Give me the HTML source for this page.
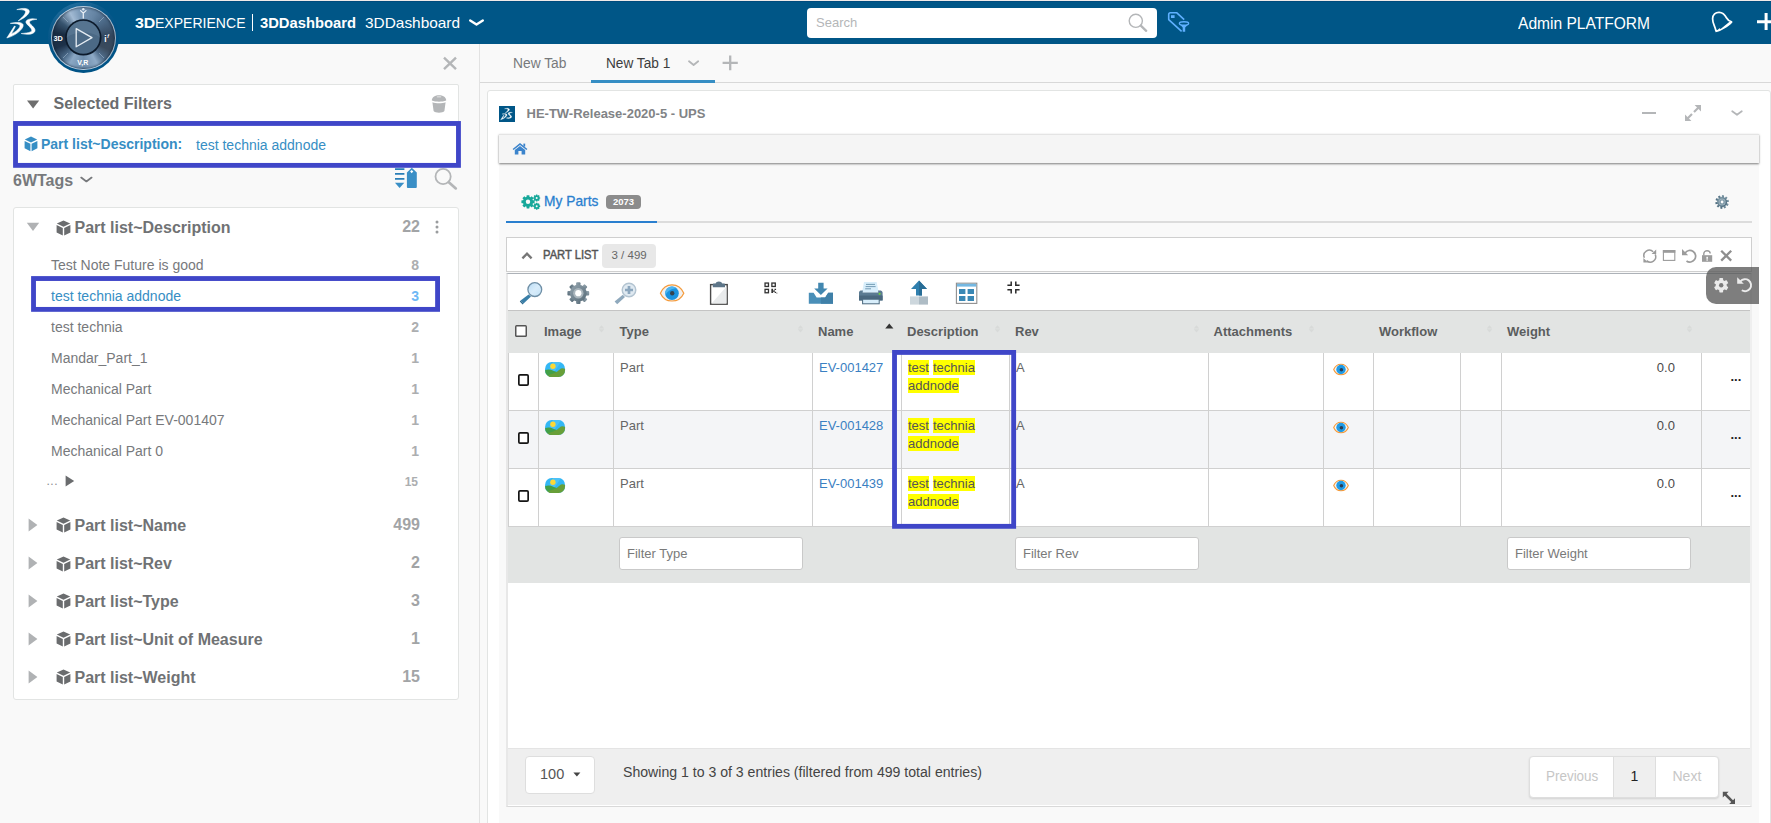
<!DOCTYPE html>
<html>
<head>
<meta charset="utf-8">
<title>3DDashboard</title>
<style>
*{box-sizing:border-box;margin:0;padding:0}
html,body{width:1771px;height:823px;overflow:hidden}
body{font-family:"Liberation Sans",sans-serif;background:#f9f9f9;color:#77797c;position:relative;font-size:13px}
.abs{position:absolute}
.t{position:absolute;white-space:nowrap;line-height:1}
svg{position:absolute;overflow:visible}
/* ---------- header ---------- */
#topstrip{left:0;top:0;width:1771px;height:1px;background:#f0eae9}
#hdr{left:0;top:1px;width:1771px;height:43px;background:#005687;border-top:1px solid #004b7d}
#search{left:807px;top:8px;width:350px;height:30px;background:#fff;border-radius:4px}
/* ---------- left panel ---------- */
#divider{left:479px;top:44px;width:1px;height:779px;background:#e2e2e2}
#selbox{left:13px;top:84px;width:446px;height:82px;background:#fff;border:1px solid #e2e4e3;border-radius:2px}
#tagbox{left:13px;top:207px;width:446px;height:493px;background:#fff;border:1px solid #e2e4e3;border-radius:3px}
.hl{border:4.8px solid #3f46c8;background:transparent}
.it{font-size:14px;color:#77797c}
.cnt{font-size:14px;color:#acaeb0;font-weight:bold;text-align:right;width:40px}
.grp{font-size:16px;font-weight:bold;color:#707274}
.gcnt{font-size:16px;color:#a2a4a6;font-weight:bold;text-align:right;width:60px}
/* ---------- tab bar ---------- */
#tabline{left:480px;top:82px;width:1291px;height:1px;background:#d8d8d8}
#tabactive{left:591px;top:80px;width:124px;height:3px;background:#368ec4}
/* ---------- widget ---------- */
#widget{left:487px;top:90px;width:1284px;height:740px;background:#fff;border:1px solid #e2e4e3;border-radius:3px}
#wbody{left:499px;top:134px;width:1260px;height:689px;background:#f9f9f9}
#crumb{left:499px;top:134px;width:1260px;height:29px;background:#f5f5f5;border-top:1px solid #e4e4e4;box-shadow:0 1px 2px rgba(0,0,0,.5)}
#mptabline{left:506px;top:221px;width:1246px;height:2px;background:#dcdcdc}
#mptabact{left:506px;top:221px;width:151px;height:2px;background:#2a7fcf}
#plhead{left:506px;top:237px;width:1246px;height:35px;background:#fff;border:1px solid #cfcfcf}
#plbody{left:506px;top:273px;width:1246px;height:534px;background:#fff;border-left:2px solid #e8e8e8;border-right:2px solid #efefef;border-bottom:1px solid #d9d9d9;border-top:1px solid #adb2b8}
#toolbar{left:508px;top:274px;width:1242px;height:37px;background:#fff;border-bottom:1px solid #c4c4c4}
#thead{left:508px;top:311px;width:1242px;height:42px;background:#e2e4e3}
#tfoot{left:508px;top:527px;width:1242px;height:56px;background:#e2e4e3}
#pfoot{left:508px;top:748px;width:1242px;height:57px;background:#efefef;border-top:1px solid #e4e4e4}
.row{left:508px;width:1242px;height:58px;border-bottom:1px solid #d0d0d0}
.vl{width:1px;background:#d0d0d0;top:353px;height:174px}
.th{font-size:13px;font-weight:bold;color:#5b5d5e}
.td{font-size:13px;color:#666}
.lnk{font-size:13px;color:#3a80c2}
.mark{background:#ffff00;color:#555;font-size:13px;line-height:15px;height:15px}
.finp{height:33px;width:184px;background:#fff;border:1px solid #c9c9c9;border-radius:3px;top:537px}
.finp span{position:absolute;left:7px;top:9.2px;font-size:13px;color:#7a7a7a;line-height:1;white-space:nowrap}
.cb{width:11.4px;height:11.6px;box-shadow:inset 0 0 0 1.7px #151515;border-radius:2px;background:#fff}
</style>
</head>
<body>
<!-- HEADER -->
<div id="topstrip" class="abs"></div>
<div id="hdr" class="abs"></div>
<div id="search" class="abs"></div>

<!-- LEFT PANEL -->
<div id="divider" class="abs"></div>
<div id="selbox" class="abs"></div>
<div id="tagbox" class="abs"></div>

<!-- TAB BAR -->
<div id="tabline" class="abs"></div>
<div id="tabactive" class="abs"></div>

<!-- WIDGET -->
<div id="widget" class="abs"></div>
<div id="wbody" class="abs"></div>
<div id="crumb" class="abs"></div>
<div id="mptabline" class="abs"></div>
<div id="mptabact" class="abs"></div>
<div id="plhead" class="abs"></div>
<div id="plbody" class="abs"></div>
<div id="toolbar" class="abs"></div>
<div id="thead" class="abs"></div>
<div class="row abs" style="top:353px;background:#fff"></div>
<div class="row abs" style="top:411px;background:#f4f5f7"></div>
<div class="row abs" style="top:469px;background:#fff"></div>
<div id="tfoot" class="abs"></div>
<div id="pfoot" class="abs"></div>
<!--VLINES-->
<div class="abs vl" style="left:538px"></div>
<div class="abs vl" style="left:613px"></div>
<div class="abs vl" style="left:812px"></div>
<div class="abs vl" style="left:901px"></div>
<div class="abs vl" style="left:1009px"></div>
<div class="abs vl" style="left:1208px"></div>
<div class="abs vl" style="left:1323px"></div>
<div class="abs vl" style="left:1373px"></div>
<div class="abs vl" style="left:1460px"></div>
<div class="abs vl" style="left:1501px"></div>
<div class="abs vl" style="left:1701px"></div>
<!--/VLINES-->
<!--TABLECONTENT-->
<div class="abs cb" style="left:515.2px;top:325.2px;width:11.4px;height:11.4px;box-shadow:inset 0 0 0 1.5px #555;border-radius:1.5px"></div>
<span class="t th" id="th0" style="left:544px;top:324.9px">Image</span>
<span class="t th" id="th1" style="left:619.5px;top:324.9px">Type</span>
<span class="t th" id="th2" style="left:818px;top:324.9px">Name</span>
<span class="t th" id="th3" style="left:907px;top:324.9px">Description</span>
<span class="t th" id="th4" style="left:1015px;top:324.9px">Rev</span>
<span class="t th" id="th5" style="left:1213.5px;top:324.9px">Attachments</span>
<span class="t th" id="th6" style="left:1379px;top:324.9px">Workflow</span>
<span class="t th" id="th7" style="left:1507px;top:324.9px">Weight</span>
<svg style="left:598.0px;top:325.2px" width="7" height="8" viewBox="0 0 7 8"><path d="M3.5,0.2 L6.3,3.5 H0.7 Z M3.5,7.6 L6.3,4.2 H0.7 Z" fill="#d8dad9"/></svg>
<svg style="left:796.5px;top:325.2px" width="7" height="8" viewBox="0 0 7 8"><path d="M3.5,0.2 L6.3,3.5 H0.7 Z M3.5,7.6 L6.3,4.2 H0.7 Z" fill="#d8dad9"/></svg>
<svg style="left:993.5px;top:325.2px" width="7" height="8" viewBox="0 0 7 8"><path d="M3.5,0.2 L6.3,3.5 H0.7 Z M3.5,7.6 L6.3,4.2 H0.7 Z" fill="#d8dad9"/></svg>
<svg style="left:1193.0px;top:325.2px" width="7" height="8" viewBox="0 0 7 8"><path d="M3.5,0.2 L6.3,3.5 H0.7 Z M3.5,7.6 L6.3,4.2 H0.7 Z" fill="#d8dad9"/></svg>
<svg style="left:1307.5px;top:325.2px" width="7" height="8" viewBox="0 0 7 8"><path d="M3.5,0.2 L6.3,3.5 H0.7 Z M3.5,7.6 L6.3,4.2 H0.7 Z" fill="#d8dad9"/></svg>
<svg style="left:1485.5px;top:325.2px" width="7" height="8" viewBox="0 0 7 8"><path d="M3.5,0.2 L6.3,3.5 H0.7 Z M3.5,7.6 L6.3,4.2 H0.7 Z" fill="#d8dad9"/></svg>
<svg style="left:1686.0px;top:325.2px" width="7" height="8" viewBox="0 0 7 8"><path d="M3.5,0.2 L6.3,3.5 H0.7 Z M3.5,7.6 L6.3,4.2 H0.7 Z" fill="#d8dad9"/></svg>
<svg style="left:885px;top:323px" width="9" height="6" viewBox="0 0 9 6"><path d="M4.3,0.4 L8.4,5.4 H0.2 Z" fill="#333"/></svg>
<div class="abs cb" style="left:518px;top:374px"></div>
<svg style="left:545px;top:361.8px" width="20" height="15" viewBox="0 0 20 15"><defs><clipPath id="ic0"><rect x="0" y="0" width="20.1" height="15.1" rx="6.6" ry="7.2"/></clipPath></defs><g clip-path="url(#ic0)"><rect width="21" height="16" fill="#33b7f5"/><path d="M8,0 L16,0 L8,12 L2,12 Z" fill="#55c5f8" opacity=".7"/><circle cx="7.9" cy="4.2" r="2.7" fill="#fdd835"/><path d="M0,8.2 C2,7.4 4.5,7.2 6.5,8 C9,9 10.5,9.8 12.4,10.3 L6,15.2 H0 Z" fill="#43a047"/><path d="M0,15.2 L3,13.2 C7,12 10,10.9 12,9.8 C14,8.2 15.4,6.2 17.2,6.2 C18.5,6.2 19.4,6.6 20.2,7 V15.2 Z" fill="#689f38"/></g></svg>
<span class="t td" style="left:620px;top:361px">Part</span>
<span class="t lnk" id="n0" style="left:819px;top:361px">EV-001427</span>
<span class="t mark" id="m0a" style="left:908px;top:360px">test</span>
<span class="t mark" id="m0b" style="left:933px;top:360px">technia</span>
<span class="t mark" id="m0c" style="left:908px;top:378px">addnode</span>
<span class="t td" style="left:1016px;top:361px">A</span>
<svg style="left:1333px;top:362.7px" width="16" height="13" viewBox="0 0 16 13"><path d="M0.7,6.5 C3.6,-0.5 12.4,-0.5 15.3,6.5 C12.4,13.5 3.6,13.5 0.7,6.5 Z" fill="#f4f4f4" stroke="#f59a3a" stroke-width="1.1"/><circle cx="8" cy="6.5" r="4.7" fill="#1f9be6"/><circle cx="8.4" cy="6.7" r="1.8" fill="#2b3d52"/></svg>
<span class="t td" style="left:1635px;top:361px;width:40px;text-align:right;letter-spacing:.1px;color:#4a4a4a">0.0</span>
<span class="t" style="left:1730.5px;top:369.7px;font-size:13px;font-weight:bold;color:#222;letter-spacing:0px">...</span>
<div class="abs cb" style="left:518px;top:432px"></div>
<svg style="left:545px;top:419.8px" width="20" height="15" viewBox="0 0 20 15"><defs><clipPath id="ic1"><rect x="0" y="0" width="20.1" height="15.1" rx="6.6" ry="7.2"/></clipPath></defs><g clip-path="url(#ic1)"><rect width="21" height="16" fill="#33b7f5"/><path d="M8,0 L16,0 L8,12 L2,12 Z" fill="#55c5f8" opacity=".7"/><circle cx="7.9" cy="4.2" r="2.7" fill="#fdd835"/><path d="M0,8.2 C2,7.4 4.5,7.2 6.5,8 C9,9 10.5,9.8 12.4,10.3 L6,15.2 H0 Z" fill="#43a047"/><path d="M0,15.2 L3,13.2 C7,12 10,10.9 12,9.8 C14,8.2 15.4,6.2 17.2,6.2 C18.5,6.2 19.4,6.6 20.2,7 V15.2 Z" fill="#689f38"/></g></svg>
<span class="t td" style="left:620px;top:419px">Part</span>
<span class="t lnk" id="n1" style="left:819px;top:419px">EV-001428</span>
<span class="t mark" id="m1a" style="left:908px;top:418px">test</span>
<span class="t mark" id="m1b" style="left:933px;top:418px">technia</span>
<span class="t mark" id="m1c" style="left:908px;top:436px">addnode</span>
<span class="t td" style="left:1016px;top:419px">A</span>
<svg style="left:1333px;top:420.7px" width="16" height="13" viewBox="0 0 16 13"><path d="M0.7,6.5 C3.6,-0.5 12.4,-0.5 15.3,6.5 C12.4,13.5 3.6,13.5 0.7,6.5 Z" fill="#f4f4f4" stroke="#f59a3a" stroke-width="1.1"/><circle cx="8" cy="6.5" r="4.7" fill="#1f9be6"/><circle cx="8.4" cy="6.7" r="1.8" fill="#2b3d52"/></svg>
<span class="t td" style="left:1635px;top:419px;width:40px;text-align:right;letter-spacing:.1px;color:#4a4a4a">0.0</span>
<span class="t" style="left:1730.5px;top:427.7px;font-size:13px;font-weight:bold;color:#222;letter-spacing:0px">...</span>
<div class="abs cb" style="left:518px;top:490px"></div>
<svg style="left:545px;top:477.8px" width="20" height="15" viewBox="0 0 20 15"><defs><clipPath id="ic2"><rect x="0" y="0" width="20.1" height="15.1" rx="6.6" ry="7.2"/></clipPath></defs><g clip-path="url(#ic2)"><rect width="21" height="16" fill="#33b7f5"/><path d="M8,0 L16,0 L8,12 L2,12 Z" fill="#55c5f8" opacity=".7"/><circle cx="7.9" cy="4.2" r="2.7" fill="#fdd835"/><path d="M0,8.2 C2,7.4 4.5,7.2 6.5,8 C9,9 10.5,9.8 12.4,10.3 L6,15.2 H0 Z" fill="#43a047"/><path d="M0,15.2 L3,13.2 C7,12 10,10.9 12,9.8 C14,8.2 15.4,6.2 17.2,6.2 C18.5,6.2 19.4,6.6 20.2,7 V15.2 Z" fill="#689f38"/></g></svg>
<span class="t td" style="left:620px;top:477px">Part</span>
<span class="t lnk" id="n2" style="left:819px;top:477px">EV-001439</span>
<span class="t mark" id="m2a" style="left:908px;top:476px">test</span>
<span class="t mark" id="m2b" style="left:933px;top:476px">technia</span>
<span class="t mark" id="m2c" style="left:908px;top:494px">addnode</span>
<span class="t td" style="left:1016px;top:477px">A</span>
<svg style="left:1333px;top:478.7px" width="16" height="13" viewBox="0 0 16 13"><path d="M0.7,6.5 C3.6,-0.5 12.4,-0.5 15.3,6.5 C12.4,13.5 3.6,13.5 0.7,6.5 Z" fill="#f4f4f4" stroke="#f59a3a" stroke-width="1.1"/><circle cx="8" cy="6.5" r="4.7" fill="#1f9be6"/><circle cx="8.4" cy="6.7" r="1.8" fill="#2b3d52"/></svg>
<span class="t td" style="left:1635px;top:477px;width:40px;text-align:right;letter-spacing:.1px;color:#4a4a4a">0.0</span>
<span class="t" style="left:1730.5px;top:485.7px;font-size:13px;font-weight:bold;color:#222;letter-spacing:0px">...</span>
<div class="abs finp" style="left:619px"><span>Filter Type</span></div>
<div class="abs finp" style="left:1015px"><span>Filter Rev</span></div>
<div class="abs finp" style="left:1507px"><span>Filter Weight</span></div>
<!--/TABLECONTENT-->
<!--HEADERCONTENT-->
<!-- DS logo -->
<svg style="left:0;top:0" width="50" height="46" viewBox="0 0 50 46">
 <g fill="#fff" stroke="#fff" stroke-width=".55" stroke-linejoin="round">
  <path d="M16.8,9.6 C21,8.2 27.2,7.6 29,10.2 C30.6,12.8 26,17.4 18.2,20.9 C22.6,17.2 26.3,13.2 25.4,11.3 C24.6,9.7 20,9.5 16.8,9.6 Z"/>
  <path d="M10.3,23.4 C15,22.2 22,21.7 23.1,24.6 C24.2,28.6 16,35.6 6.8,38 L14.4,26.1 L15.4,26.5 L11.5,33.8 C15.5,32.1 20.4,28 19.9,25.4 C19.4,23.5 14,23.4 10.3,23.4 Z"/>
  <path d="M36.9,19.3 C33,18.1 27,18.8 26,21.4 C25,24.1 31.8,27.2 31.8,30.4 C31.8,32.4 26,33.2 21.2,33.5 C27,35 34,34.6 35,31 C36,27.5 28.6,24 29.6,21.8 C30.3,20.1 34,19.6 36.9,19.3 Z"/>
 </g>
</svg>
<!-- compass -->
<div class="abs" style="left:47.5px;top:1.5px;width:71.5px;height:71.5px;border-radius:50%;background:linear-gradient(160deg,#2f78a6 0%,#0d5c8d 25%,#005386 50%,#005386 100%)"></div>
<div class="abs" style="left:51px;top:5.5px;width:64.5px;height:64.5px;border-radius:50%;border:1px solid rgba(205,220,235,.75);background:conic-gradient(from 0deg,#7594b3 0deg,#6685a4 25deg,#4c6a88 50deg,#33475e 85deg,#3a4a5c 115deg,#4f6c8a 135deg,#8eaac6 152deg,#6f8fae 180deg,#8aa7c4 208deg,#4a6988 225deg,#1d3149 250deg,#182b41 280deg,#37546f 305deg,#a2bad3 332deg,#7e9cba 350deg,#7594b3 360deg);box-shadow:inset 0 0 3px #0a1d30"></div>
<svg style="left:47px;top:1px" width="73" height="73" viewBox="0 0 73 73">
 <g stroke="#9db4ca" stroke-width="0.8" opacity=".8">
  <line x1="52" y1="21" x2="57" y2="16"/><line x1="21" y1="21" x2="16" y2="16"/>
  <line x1="52" y1="52" x2="57" y2="57"/><line x1="21" y1="52" x2="16" y2="57"/>
 </g>
 <circle cx="36.3" cy="36.4" r="18.2" fill="#0c1a2b"/>
 <circle cx="36.3" cy="36.4" r="16.4" fill="#4b6985"/>
 <path d="M36.3,19.8 A16.6,16.6 0 0 1 52.9,36.4 C45,30 28,30 19.7,36.4 A16.6,16.6 0 0 1 36.3,19.8Z" fill="#5d7b97" opacity=".6"/>
 <path d="M29.2,27.6 L45,36.6 L29.2,45.8 Z" fill="none" stroke="#e6edf3" stroke-width="1.3" stroke-linejoin="round"/>
 <g fill="#fff" font-family="Liberation Sans, sans-serif" font-weight="bold">
  <text x="6.4" y="39.8" font-size="7.3">3D</text>
  <text x="30.2" y="64" font-size="7">V,R</text>
  <text x="57.2" y="40.5" font-size="8.5">i</text>
  <text x="60.2" y="36.5" font-size="5" font-style="italic">f</text>
 </g>
 <g stroke="#e8eef4" stroke-width="1.3" fill="none" stroke-linecap="round">
  <path d="M36.3,17 V11.8 M33.6,9.6 L36.3,12.2 L39,9.6"/>
 </g>
 <circle cx="36.3" cy="8.3" r="1.2" fill="#dfe8f0"/>
</svg>
<!-- brand text -->
<span class="t" id="h1" style="left:134.5px;top:15px;font-size:15px;color:#fff;font-weight:bold;transform-origin:0 0;transform:scaleX(1.06)">3D</span>
<span class="t" id="h2" style="left:155px;top:15px;font-size:15px;color:#fff;transform-origin:0 0;transform:scaleX(0.936)">EXPERIENCE</span>
<div class="abs" style="left:251.5px;top:14px;width:1px;height:17px;background:#fff"></div>
<span class="t" id="h3" style="left:259.5px;top:15px;font-size:15px;color:#fff;font-weight:bold;transform-origin:0 0;transform:scaleX(0.984)">3DDashboard</span>
<span class="t" id="h4" style="left:364.5px;top:15px;font-size:15px;color:#fff;transform-origin:0 0;transform:scaleX(1.027)">3DDashboard</span>
<svg style="left:469px;top:19px" width="15" height="8" viewBox="0 0 15 8"><path d="M1.2,1.5 L7.5,5.5 L13.8,1.5" fill="none" stroke="#fff" stroke-width="2.4" stroke-linecap="round" stroke-linejoin="round"/></svg>
<!-- search -->
<span class="t" id="h5" style="left:816px;top:16px;font-size:13px;color:#b4b6b8;transform-origin:0 0">Search</span>
<svg style="left:1126px;top:11px" width="24" height="24" viewBox="0 0 24 24"><circle cx="9.8" cy="9.8" r="6.6" fill="none" stroke="#b4b6b8" stroke-width="1.4"/><path d="M14.8,14.6 L20.2,19.8" stroke="#b4b6b8" stroke-width="2.3" stroke-linecap="round"/></svg>
<!-- tag filter icon -->
<svg style="left:1166px;top:10px" width="26" height="24" viewBox="0 0 26 24">
 <path d="M18.2,9.7 L10.6,2.7 H4.4 Q2.7,2.7 2.7,4.4 V9.6 L15.6,21.4" fill="none" stroke="#5fb0ff" stroke-width="1.6" stroke-linejoin="round"/>
 <rect x="5" y="5.2" width="3.6" height="2.8" fill="#5fb0ff"/>
 <path d="M13.4,14 L16.7,17.6 V21.8 H19.2 V17.6 L22.6,14 Z" fill="#5fb0ff"/>
 <ellipse cx="18" cy="13.4" rx="4.6" ry="1.7" fill="#005687" stroke="#5fb0ff" stroke-width="1.4"/>
</svg>
<!-- user -->
<span class="t" id="h6" style="left:1518px;top:15.5px;font-size:16px;color:#fff;transform-origin:0 0;transform:scaleX(0.973)">Admin PLATFORM</span>
<!-- bell -->
<svg style="left:1710px;top:10px" width="26" height="24" viewBox="0 0 26 24">
 <path d="M5.8,20.4 C5,16.2 2.5,13.2 2.6,8.8 C2.7,4.6 5.6,2.2 9.2,2.3 C13,2.4 15,5 16.6,8 C17.8,10.2 19.4,11.2 21.6,11.8" fill="none" stroke="#fff" stroke-width="1.7" stroke-linecap="round"/>
 <path d="M5,19.6 L7.6,20 L9.4,18.2 L10.6,19 L20.8,10.8 L22.4,12.4 C18.2,16.8 11.2,21 5.6,22.2 Z" fill="#fff"/>
</svg>
<!-- plus -->
<svg style="left:1756px;top:12px" width="16" height="20" viewBox="0 0 16 20"><path d="M1,9.7 H16 M10.1,1.1 V18.1" stroke="#fff" stroke-width="3"/></svg>
<!--/HEADERCONTENT-->
<!--LEFTCONTENT-->
<!-- close x -->
<svg style="left:442px;top:56px" width="16" height="15" viewBox="0 0 16 15"><path d="M2,1.6 L14,13.2 M14,1.6 L2,13.2" stroke="#b4b6b8" stroke-width="2.4"/></svg>
<!-- selected filters -->
<svg style="left:26px;top:99px" width="14" height="10" viewBox="0 0 14 10"><path d="M1,1.6 H13.2 L7.1,9.4 Z" fill="#6e6e6e"/></svg>
<span class="t" id="l1" style="left:53.5px;top:96px;font-size:16px;font-weight:bold;color:#6a6c6e">Selected Filters</span>
<svg style="left:430px;top:94px" width="18" height="20" viewBox="0 0 18 20">
 <path d="M1.8,6.6 C1.8,-0.4 16.2,-0.4 16.2,6.6 C12,8.2 6,8.2 1.8,6.6 Z" fill="#b4b6b8"/>
 <rect x="6.8" y="2" width="4.4" height="1.6" rx=".6" fill="#d4d5d6"/>
 <path d="M2.4,8.2 C6,9.6 12,9.6 15.6,8.2 L14.4,17 C13,19.2 5,19.2 3.6,17 Z" fill="#b4b6b8"/>
</svg>
<!-- selected row -->
<svg style="left:24px;top:136px" width="14" height="16" viewBox="0 0 14 16" id="cube0">
 <path d="M7,0.6 L13.2,3.6 L7,6.6 L0.8,3.6 Z" fill="#368ec4"/>
 <path d="M0.6,5 L6.4,7.8 V15.2 L0.6,12.2 Z" fill="#368ec4"/>
 <path d="M13.4,5 L7.6,7.8 V15.2 L13.4,12.2 Z" fill="#368ec4"/>
</svg>
<span class="t" id="l2" style="left:41px;top:136.5px;font-size:14px;font-weight:bold;color:#368ec4">Part list~Description:</span>
<span class="t" id="l3" style="left:196px;top:137.5px;font-size:14px;color:#368ec4">test technia addnode</span>
<!-- 6WTags -->
<span class="t" id="l4" style="left:13px;top:173px;font-size:16px;font-weight:bold;color:#77797c">6WTags</span>
<svg style="left:80px;top:176px" width="13" height="8" viewBox="0 0 13 8"><path d="M1.2,1.6 L6.4,5.4 L11.6,1.6" fill="none" stroke="#77797c" stroke-width="1.8" stroke-linecap="round" stroke-linejoin="round"/></svg>
<svg style="left:393px;top:167px" width="26" height="22" viewBox="0 0 26 22">
 <g stroke="#2a7fb8" stroke-width="1.8"><path d="M2,2.1 H11.4 M2,6.9 H11.4 M2,11.8 H11.4"/></g>
 <path d="M2,15.8 H11.3 L6.6,21 Z" fill="#3a8fc6"/>
 <path d="M13.9,5.4 L18.8,0.8 L23.8,5.4 V20 Q23.8,21 22.8,21 H14.9 Q13.9,21 13.9,20 Z" fill="#3a8fc6"/>
 <path d="M18.7,3 L20.3,4.6 L18.7,6.2 L17.1,4.6 Z" fill="#fff"/>
</svg>
<svg style="left:433px;top:168px" width="26" height="24" viewBox="0 0 26 24"><circle cx="10.1" cy="8.5" r="7.6" fill="none" stroke="#b4b6b8" stroke-width="1.8"/><path d="M15.8,14.2 L22.8,20.4" stroke="#b4b6b8" stroke-width="2.7" stroke-linecap="round"/></svg>
<!-- tag groups -->
<svg style="left:26px;top:222px" width="14" height="10" viewBox="0 0 14 10"><path d="M0.8,0.8 H13.2 L7,9 Z" fill="#b0b2b4"/></svg>
<svg class="cube" style="left:56px;top:220px" width="15" height="16" viewBox="0 0 15 16"><path d="M7.5,0.4 L14.2,3.6 L7.5,6.8 L0.8,3.6 Z M0.6,5.1 L6.8,8 V15.6 L0.6,12.4 Z M14.4,5.1 L8.2,8 V15.6 L14.4,12.4 Z" fill="#6a6c6e"/></svg>
<span class="t grp" id="g0" style="left:74.5px;top:219.8px">Part list~Description</span>
<span class="t gcnt" style="left:360px;top:218.8px">22</span>
<svg style="left:435px;top:219px" width="4" height="16" viewBox="0 0 4 16"><circle cx="2" cy="3" r="1.5" fill="#9a9c9e"/><circle cx="2" cy="8" r="1.5" fill="#9a9c9e"/><circle cx="2" cy="13" r="1.5" fill="#9a9c9e"/></svg>

<span class="t it" id="i0" style="left:51px;top:257.5px">Test Note Future is good</span><span class="t cnt" style="left:379px;top:258.0px">8</span>
<span class="t it" id="i1" style="left:51px;top:288.5px;color:#368ec4">test technia addnode</span><span class="t cnt" style="left:379px;top:289.0px;color:#6fb8f5">3</span>
<span class="t it" id="i2" style="left:51px;top:319.5px">test technia</span><span class="t cnt" style="left:379px;top:320.0px">2</span>
<span class="t it" id="i3" style="left:51px;top:350.5px">Mandar_Part_1</span><span class="t cnt" style="left:379px;top:351.0px">1</span>
<span class="t it" id="i4" style="left:51px;top:381.5px">Mechanical Part</span><span class="t cnt" style="left:379px;top:382.0px">1</span>
<span class="t it" id="i5" style="left:51px;top:412.5px">Mechanical Part EV-001407</span><span class="t cnt" style="left:379px;top:413.0px">1</span>
<span class="t it" id="i6" style="left:51px;top:443.5px">Mechanical Part 0</span><span class="t cnt" style="left:379px;top:444.0px">1</span>
<span class="t" style="left:46.5px;top:475.2px;font-size:12px;color:#8a8c8e;letter-spacing:.5px">...</span>
<svg style="left:65px;top:475px" width="10" height="12" viewBox="0 0 10 12"><path d="M0.6,0.4 L9.2,6 L0.6,11.6 Z" fill="#6a6c6e"/></svg>
<span class="t cnt" style="left:378px;top:476px;font-size:12px;font-weight:bold">15</span>
<svg style="left:28px;top:517.9px" width="10" height="14" viewBox="0 0 10 14"><path d="M0.6,0.6 L9.4,7 L0.6,13.4 Z" fill="#b0b2b4"/></svg>
<svg class="cube" style="left:56px;top:517.1px" width="15" height="16" viewBox="0 0 15 16"><path d="M7.5,0.4 L14.2,3.6 L7.5,6.8 L0.8,3.6 Z M0.6,5.1 L6.8,8 V15.6 L0.6,12.4 Z M14.4,5.1 L8.2,8 V15.6 L14.4,12.4 Z" fill="#6a6c6e"/></svg>
<span class="t grp" id="g1" style="left:74.5px;top:517.8px">Part list~Name</span>
<span class="t gcnt" style="left:360px;top:516.8px">499</span>
<svg style="left:28px;top:556.3px" width="10" height="14" viewBox="0 0 10 14"><path d="M0.6,0.6 L9.4,7 L0.6,13.4 Z" fill="#b0b2b4"/></svg>
<svg class="cube" style="left:56px;top:555.5px" width="15" height="16" viewBox="0 0 15 16"><path d="M7.5,0.4 L14.2,3.6 L7.5,6.8 L0.8,3.6 Z M0.6,5.1 L6.8,8 V15.6 L0.6,12.4 Z M14.4,5.1 L8.2,8 V15.6 L14.4,12.4 Z" fill="#6a6c6e"/></svg>
<span class="t grp" id="g2" style="left:74.5px;top:556.2px">Part list~Rev</span>
<span class="t gcnt" style="left:360px;top:555.2px">2</span>
<svg style="left:28px;top:594.1px" width="10" height="14" viewBox="0 0 10 14"><path d="M0.6,0.6 L9.4,7 L0.6,13.4 Z" fill="#b0b2b4"/></svg>
<svg class="cube" style="left:56px;top:593.3px" width="15" height="16" viewBox="0 0 15 16"><path d="M7.5,0.4 L14.2,3.6 L7.5,6.8 L0.8,3.6 Z M0.6,5.1 L6.8,8 V15.6 L0.6,12.4 Z M14.4,5.1 L8.2,8 V15.6 L14.4,12.4 Z" fill="#6a6c6e"/></svg>
<span class="t grp" id="g3" style="left:74.5px;top:594.0px">Part list~Type</span>
<span class="t gcnt" style="left:360px;top:593.0px">3</span>
<svg style="left:28px;top:632.1px" width="10" height="14" viewBox="0 0 10 14"><path d="M0.6,0.6 L9.4,7 L0.6,13.4 Z" fill="#b0b2b4"/></svg>
<svg class="cube" style="left:56px;top:631.3px" width="15" height="16" viewBox="0 0 15 16"><path d="M7.5,0.4 L14.2,3.6 L7.5,6.8 L0.8,3.6 Z M0.6,5.1 L6.8,8 V15.6 L0.6,12.4 Z M14.4,5.1 L8.2,8 V15.6 L14.4,12.4 Z" fill="#6a6c6e"/></svg>
<span class="t grp" id="g4" style="left:74.5px;top:632.0px">Part list~Unit of Measure</span>
<span class="t gcnt" style="left:360px;top:631.0px">1</span>
<svg style="left:28px;top:670.0px" width="10" height="14" viewBox="0 0 10 14"><path d="M0.6,0.6 L9.4,7 L0.6,13.4 Z" fill="#b0b2b4"/></svg>
<svg class="cube" style="left:56px;top:669.2px" width="15" height="16" viewBox="0 0 15 16"><path d="M7.5,0.4 L14.2,3.6 L7.5,6.8 L0.8,3.6 Z M0.6,5.1 L6.8,8 V15.6 L0.6,12.4 Z M14.4,5.1 L8.2,8 V15.6 L14.4,12.4 Z" fill="#6a6c6e"/></svg>
<span class="t grp" id="g5" style="left:74.5px;top:669.9px">Part list~Weight</span>
<span class="t gcnt" style="left:360px;top:668.9px">15</span>
<!--/LEFTCONTENT-->
<!--WIDGETCONTENT-->
<!-- tabs -->
<span class="t" id="w1" style="left:513px;top:55.5px;font-size:14px;color:#77797c;transform-origin:0 0;transform:scaleX(.985)">New Tab</span>
<span class="t" id="w2" style="left:605.5px;top:55.5px;font-size:14px;color:#3d3d3d;transform-origin:0 0;transform:scaleX(.975)">New Tab 1</span>
<svg style="left:688px;top:60px" width="12" height="7" viewBox="0 0 12 7"><path d="M1,1.2 L5.6,5 L10.2,1.2" fill="none" stroke="#b4b6b8" stroke-width="1.8" stroke-linecap="round" stroke-linejoin="round"/></svg>
<svg style="left:722px;top:55px" width="17" height="16" viewBox="0 0 17 16"><path d="M0.6,7.9 H15.8 M8.2,0.5 V15.3" stroke="#b4b6b8" stroke-width="2.3"/></svg>
<!-- widget header -->
<div class="abs" style="left:499px;top:106px;width:16px;height:16px;background:#005687"></div>
<svg style="left:498.3px;top:105px" width="19.5" height="17.94" viewBox="0 0 50 46">
 <g fill="#fff" stroke="#fff" stroke-width=".8">
  <path d="M16.8,9.6 C21,8.2 27.2,7.6 29,10.2 C30.6,12.8 26,17.4 18.2,20.9 C22.6,17.2 26.3,13.2 25.4,11.3 C24.6,9.7 20,9.5 16.8,9.6 Z"/>
  <path d="M10.3,23.4 C15,22.2 22,21.7 23.1,24.6 C24.2,28.6 16,35.6 6.8,38 L14.4,26.1 L15.4,26.5 L11.5,33.8 C15.5,32.1 20.4,28 19.9,25.4 C19.4,23.5 14,23.4 10.3,23.4 Z"/>
  <path d="M36.9,19.3 C33,18.1 27,18.8 26,21.4 C25,24.1 31.8,27.2 31.8,30.4 C31.8,32.4 26,33.2 21.2,33.5 C27,35 34,34.6 35,31 C36,27.5 28.6,24 29.6,21.8 C30.3,20.1 34,19.6 36.9,19.3 Z"/>
 </g>
</svg>
<span class="t" id="w3" style="left:526.5px;top:107.3px;font-size:13px;font-weight:bold;color:#818386">HE-TW-Release-2020-5 - UPS</span>
<div class="abs" style="left:1642px;top:111.7px;width:14px;height:2.2px;background:#b4b6b8"></div>
<svg style="left:1684px;top:104px" width="18" height="18" viewBox="0 0 18 18">
 <g fill="#b4b6b8"><path d="M10.6,1 H17 V7.4 Z"/><path d="M1,10.6 V17 H7.4 Z"/></g>
 <path d="M10,8 L15,3 M3,15 L8,10" stroke="#b4b6b8" stroke-width="2.2"/>
</svg>
<svg style="left:1731px;top:110px" width="12" height="7" viewBox="0 0 12 7"><path d="M1.2,1.2 L6,4.8 L10.8,1.2" fill="none" stroke="#b4b6b8" stroke-width="1.7" stroke-linecap="round" stroke-linejoin="round"/></svg>
<!-- breadcrumb home -->
<svg style="left:512px;top:142px" width="16" height="13" viewBox="0 0 16 13">
 <path d="M8,1 L15.4,7 L14.4,8 L8,2.9 L1.6,8 L0.6,7 Z" fill="#3c84cc"/>
 <path d="M8,3.9 L13.2,8.1 V12.4 H9.6 V9 H6.4 V12.4 H2.8 V8.1 Z" fill="#3c84cc"/>
 <rect x="11.4" y="1.6" width="1.8" height="3" fill="#3c84cc"/>
</svg>
<!-- My Parts tab -->
<svg style="left:521px;top:194px" width="20" height="16" viewBox="0 0 20 16" id="gears"><g fill="#17a89a"><g transform="translate(7,7.8)"><rect x="-1.45" y="-6.6" width="2.9" height="13.2" rx=".4" transform="rotate(0.0)"/><rect x="-1.45" y="-6.6" width="2.9" height="13.2" rx=".4" transform="rotate(45.0)"/><rect x="-1.45" y="-6.6" width="2.9" height="13.2" rx=".4" transform="rotate(90.0)"/><rect x="-1.45" y="-6.6" width="2.9" height="13.2" rx=".4" transform="rotate(135.0)"/><circle r="5.1"/><circle r="2.2" fill="#f9f9f9"/></g><g transform="translate(15.7,4)"><rect x="-0.85" y="-3.5" width="1.7" height="7.0" rx=".4" transform="rotate(0.0)"/><rect x="-0.85" y="-3.5" width="1.7" height="7.0" rx=".4" transform="rotate(45.0)"/><rect x="-0.85" y="-3.5" width="1.7" height="7.0" rx=".4" transform="rotate(90.0)"/><rect x="-0.85" y="-3.5" width="1.7" height="7.0" rx=".4" transform="rotate(135.0)"/><circle r="2.6"/><circle r="1.0" fill="#f9f9f9"/></g><g transform="translate(15.7,12.2)"><rect x="-0.85" y="-3.5" width="1.7" height="7.0" rx=".4" transform="rotate(0.0)"/><rect x="-0.85" y="-3.5" width="1.7" height="7.0" rx=".4" transform="rotate(45.0)"/><rect x="-0.85" y="-3.5" width="1.7" height="7.0" rx=".4" transform="rotate(90.0)"/><rect x="-0.85" y="-3.5" width="1.7" height="7.0" rx=".4" transform="rotate(135.0)"/><circle r="2.6"/><circle r="1.0" fill="#f9f9f9"/></g></g></svg>
<span class="t" id="w4" style="left:543.5px;top:194px;font-size:14.5px;color:#2a7fcf;-webkit-text-stroke:.3px #2a7fcf;transform-origin:0 0;transform:scaleX(.95)">My Parts</span>
<div class="abs" style="left:606px;top:195px;width:35px;height:14px;background:#8c8c8c;border-radius:4px"></div>
<span class="t" id="w5" style="left:613px;top:197px;font-size:9.5px;font-weight:bold;color:#fff">2073</span>
<!-- small gear right -->
<svg style="left:1715px;top:195px" width="14" height="14" viewBox="0 0 14 14">
 <defs><linearGradient id="sg" x1="0" y1="0" x2="1" y2="1"><stop offset="0" stop-color="#86a0ad"/><stop offset="1" stop-color="#456477"/></linearGradient></defs>
 <g transform="translate(7.1,7)"><g fill="url(#sg)"><rect x="-1.05" y="-6.8" width="2.1" height="13.6" transform="rotate(8)"/><rect x="-1.05" y="-6.8" width="2.1" height="13.6" transform="rotate(44)"/><rect x="-1.05" y="-6.8" width="2.1" height="13.6" transform="rotate(80)"/><rect x="-1.05" y="-6.8" width="2.1" height="13.6" transform="rotate(116)"/><rect x="-1.05" y="-6.8" width="2.1" height="13.6" transform="rotate(152)"/><circle r="5"/></g><circle r="3.5" fill="#9fb4bf"/><circle r="2.6" fill="#7c97a5"/><circle r="1.4" fill="#fdfdfd"/></g>
</svg>
<!-- PART LIST header -->
<svg style="left:521px;top:251px" width="12" height="9" viewBox="0 0 12 9"><path d="M1.4,7.4 L6,2.6 L10.6,7.4" fill="none" stroke="#777" stroke-width="2.3" stroke-linejoin="miter"/></svg>
<span class="t" id="w6" style="left:542.5px;top:249px;font-size:12px;font-weight:normal;color:#555;-webkit-text-stroke:.45px #555;transform-origin:0 0;transform:scaleX(.934)">PART LIST</span>
<div class="abs" style="left:602px;top:244px;width:54px;height:24px;background:#e8e8e8;border-radius:4px"></div>
<span class="t" id="w7" style="left:611.5px;top:249.8px;font-size:11.5px;color:#666;transform-origin:0 0">3 / 499</span>
<!-- toolbar icons -->
<svg style="left:518px;top:279px" width="27" height="27" viewBox="0 0 27 27">
 <defs><linearGradient id="lg1" x1="0" y1="0" x2="1" y2="1"><stop offset="0" stop-color="#b9dcf5"/><stop offset=".5" stop-color="#d8ecfa"/><stop offset="1" stop-color="#c2e2f7"/></linearGradient></defs>
 <path d="M10.6,15.4 L13,17.6 L5.6,24.6 L2.6,21.6 Z" fill="#3a7fa8"/>
 <path d="M2.6,21.6 L5.6,24.6 L4.6,25.4 L1.8,22.4 Z" fill="#2f6b90"/>
 <circle cx="16.8" cy="10.6" r="6.9" fill="url(#lg1)" stroke="#6f8fa6" stroke-width="1.3"/>
</svg>
<svg style="left:566px;top:281px" width="25" height="25" viewBox="0 0 25 25">
 <defs><linearGradient id="gg" x1="0" y1="0" x2="1" y2="1"><stop offset="0" stop-color="#93a3ad"/><stop offset="1" stop-color="#586c79"/></linearGradient></defs>
 <g transform="translate(12.3,12.2)">
  <g fill="url(#gg)">
   <rect x="-2.2" y="-10.9" width="4.4" height="21.8" rx="1"/>
   <rect x="-2.2" y="-10.9" width="4.4" height="21.8" rx="1" transform="rotate(45)"/>
   <rect x="-2.2" y="-10.9" width="4.4" height="21.8" rx="1" transform="rotate(90)"/>
   <rect x="-2.2" y="-10.9" width="4.4" height="21.8" rx="1" transform="rotate(135)"/>
   <circle r="8.4"/>
  </g>
  <circle r="5.2" fill="#aab6bd"/><circle r="3.1" fill="#fff"/>
 </g>
</svg>
<svg style="left:612px;top:280px" width="27" height="27" viewBox="0 0 27 27">
 <path d="M10.8,14.8 L13,17 L5.2,24.2 L2.6,21.6 Z" fill="#8fa9bd"/>
 <circle cx="17" cy="10" r="6.8" fill="#dfe9f1" stroke="#b3c4d1" stroke-width="1.4"/>
 <path d="M13,10 H21 M17,6 V14" stroke="#8ba6bd" stroke-width="2.7"/>
</svg>
<svg style="left:659px;top:283px" width="26" height="21" viewBox="0 0 26 21">
 <path d="M1.4,10.2 C6,-1 20,-1 24.8,10.2 C20,20.6 6,20.6 1.4,10.2 Z" fill="#f0f0f0" stroke="#f59a3a" stroke-width="1.2"/>
 <circle cx="13" cy="10.2" r="6.8" fill="#1a93e0"/>
 <path d="M13,3.4 A6.8,6.8 0 0 0 6.6,12.4 C8,8 12,6 17.4,5 A6.8,6.8 0 0 0 13,3.4Z" fill="#4db5f0"/>
 <circle cx="13.2" cy="10.3" r="2.2" fill="#34434f"/>
</svg>
<svg style="left:708px;top:280px" width="22" height="26" viewBox="0 0 22 26">
 <rect x="2.6" y="4.6" width="16.6" height="19.6" fill="#fff" stroke="#4a4a4a" stroke-width="1.4"/>
 <path d="M18.4,6.4 V23.4 H3.6 Z" fill="#e9ebec"/>
 <path d="M4.8,7.2 V4.4 Q4.8,3.6 5.6,3.6 H7.6 C8,0.8 13.8,0.8 14.2,3.6 H16.2 Q17,3.6 17,4.4 V7.2 Z" fill="#5d7588"/>
</svg>
<svg style="left:764px;top:281.6px" width="14" height="12.25" viewBox="0 0 16 14">
 <g fill="none" stroke="#333" stroke-width="1.5"><rect x="1.2" y="1.2" width="3.9" height="3.9"/><rect x="9" y="1.2" width="3.9" height="3.9"/><rect x="1.2" y="8.4" width="3.9" height="3.9"/></g>
 <path d="M8.4,7.6 h2 v2 h1.6 v-2 h1.8 v1.6 h-1.4 v1.8 h1.4 v1.6 h-1.6 v-1.4 h-1.8 v1.4 h-2 Z" fill="#333"/>
 <rect x="14.2" y="12.2" width="1" height="1" fill="#333"/>
</svg>
<svg style="left:808px;top:282px" width="26" height="23" viewBox="0 0 26 23">
 <path d="M10.2,0.8 H15.6 V6.4 H19.6 L12.9,13 L6.2,6.4 H10.2 Z" fill="#4287b0"/>
 <path d="M0.8,10.8 H5.6 L8.6,15.4 H17.2 L20.2,10.8 H25 V21.8 H0.8 Z" fill="#4a8fb8"/>
 <path d="M12.9,15.4 H17.2 L20.2,10.8 H25 V21.8 H12.9 Z" fill="#3f80a8"/>
</svg>
<svg style="left:858px;top:281px" width="26" height="24" viewBox="0 0 26 24">
 <path d="M6,1 H18.6 L20.8,11.4 H4 Z" fill="#d8eefb"/>
 <path d="M8,3.4 H17 M7.6,5.6 H17.6 M7.2,7.8 H13" stroke="#6a93ad" stroke-width=".9"/>
 <path d="M1,11.6 C1,10 2.2,9.4 3.4,9.4 H5 L4.6,11.4 H20.4 L20,9.4 H21.8 C23.2,9.4 24.6,10 24.6,11.6 V19.4 H1 Z" fill="#5b7b92"/>
 <rect x="1" y="14.6" width="23.6" height="4.8" fill="#4a687e"/>
 <rect x="4.6" y="18.2" width="16.6" height="4.6" fill="#d8eefb" stroke="#4a687e" stroke-width="1"/>
 <circle cx="21.6" cy="12.8" r="1.1" fill="#6fd13b"/>
</svg>
<svg style="left:908px;top:280px" width="22" height="26" viewBox="0 0 22 26">
 <path d="M11,0.6 L19,9 H14 V15.6 H8 V9 H3 Z" fill="#2f7fae"/>
 <path d="M11,0.6 L19,9 H14 V15.6 H11 Z" fill="#286d96"/>
 <rect x="2" y="16.4" width="9" height="8.2" fill="#cdd7dd"/>
 <rect x="11" y="16.4" width="9" height="8.2" fill="#aebcc5"/>
</svg>
<svg style="left:955px;top:282px" width="24" height="23" viewBox="0 0 24 23">
 <rect x="1.4" y="1.2" width="20.4" height="20.2" fill="#fff" stroke="#8e8e8e" stroke-width="1.1"/>
 <rect x="2" y="1.8" width="19.2" height="2.8" fill="#74b8e2"/>
 <g fill="#3a88b5"><rect x="4" y="7" width="6.4" height="5"/><rect x="12.6" y="7" width="6.4" height="5"/><rect x="4" y="14" width="6.4" height="5"/><rect x="12.6" y="14" width="6.4" height="5"/></g>
</svg>
<svg style="left:1007px;top:281px" width="14" height="14" viewBox="0 0 14 14">
 <path d="M0.4,4.2 H4.2 V0.4 M8.8,0.4 V4.2 H12.6 M0.4,8.8 H4.2 V12.6 M8.8,12.6 V8.8 H12.6" fill="none" stroke="#2a2a2a" stroke-width="1.5"/>
</svg>
<!-- PART LIST header right icons -->
<svg style="left:1642px;top:249px" width="16" height="14" viewBox="0 0 16 14">
 <g fill="none" stroke="#9b9b9b" stroke-width="1.5">
  <path d="M2.4,8.8 A5.4,5.4 0 0 1 11.2,2.8"/><path d="M13.2,5.4 A5.4,5.4 0 0 1 4.6,11.6"/>
 </g>
 <path d="M9.6,5 H14.2 V0.6 Z M1.4,8.9 V13.4 H6 Z" fill="#9b9b9b"/>
</svg>
<svg style="left:1662px;top:249px" width="15" height="13" viewBox="0 0 15 13"><rect x="1.4" y="1.6" width="11.4" height="9.8" fill="none" stroke="#9b9b9b" stroke-width="1.1"/><rect x="0.9" y="1" width="12.4" height="2.8" fill="#9b9b9b"/></svg>
<svg style="left:1681px;top:248px" width="16" height="16" viewBox="0 0 16 16">
 <path d="M4.1,4.9 A5.8,5.8 0 1 1 5.5,13" fill="none" stroke="#9b9b9b" stroke-width="1.7"/>
 <path d="M1,1 V7.2 H7.2 Z" fill="#9b9b9b"/>
</svg>
<svg style="left:1701px;top:249px" width="12" height="14" viewBox="0 0 12 14">
 <path d="M2.8,6.4 V4.6 C2.8,0.8 9.2,0.8 9.2,4.6" fill="none" stroke="#9b9b9b" stroke-width="1.4"/>
 <rect x="1" y="6.2" width="10.2" height="6.6" fill="#9b9b9b"/>
 <rect x="5.4" y="7.8" width="1.5" height="2" fill="#fff"/><rect x="5.4" y="10.4" width="1.5" height="1.2" fill="#fff"/>
</svg>
<svg style="left:1720px;top:250px" width="13" height="12" viewBox="0 0 13 12"><path d="M1.2,0.8 L11.2,10.6 M11.2,0.8 L1.2,10.6" stroke="#8e8e8e" stroke-width="2.3"/></svg>
<!-- floating buttons -->
<div class="abs" style="left:1706px;top:267px;width:53px;height:37px;background:rgba(86,86,86,.76);border-radius:10px 0 0 10px"></div>
<svg style="left:1713px;top:277px" width="16" height="16" viewBox="0 0 16 16">
 <g transform="translate(8.2,8.2)">
  <g fill="#ebebeb"><rect x="-1.9" y="-7.2" width="3.8" height="14.4" rx=".7"/><rect x="-1.9" y="-7.2" width="3.8" height="14.4" rx=".7" transform="rotate(60)"/><rect x="-1.9" y="-7.2" width="3.8" height="14.4" rx=".7" transform="rotate(120)"/><circle r="5.5"/></g>
  <circle r="2.2" fill="#7c7c7c"/>
 </g>
</svg>
<svg style="left:1736px;top:276px" width="17" height="17" viewBox="0 0 17 17">
 <path d="M4.4,5.4 A6,6 0 1 1 5.8,14.2" fill="none" stroke="#ebebeb" stroke-width="1.9"/>
 <path d="M1.2,1.2 V7.8 H7.8 Z" fill="#ebebeb"/>
</svg>
<div class="abs" style="left:508px;top:353px;width:1px;height:174px;background:#cfcfcf"></div>
<!-- pagination footer -->
<div class="abs" style="left:525px;top:756px;width:70px;height:38px;background:#fff;border:1px solid #dedede;border-radius:4px"></div>
<span class="t" id="f1" style="left:540px;top:767px;font-size:14.5px;color:#555;transform-origin:0 0">100</span>
<svg style="left:573px;top:772px" width="8" height="5" viewBox="0 0 8 5"><path d="M0.4,0.5 H7.4 L3.9,4.4 Z" fill="#444"/></svg>
<span class="t" id="f2" style="left:622.5px;top:765px;font-size:14px;color:#444;transform-origin:0 0;transform:scaleX(1.007)">Showing 1 to 3 of 3 entries (filtered from 499 total entries)</span>
<div class="abs" style="left:1529px;top:756px;width:190px;height:42px;background:#fff;border:1px solid #dedede;border-radius:4px;box-shadow:0 1px 2px rgba(0,0,0,.12)"></div>
<div class="abs" style="left:1613px;top:757px;width:43px;height:40px;background:#efefef;border-left:1px solid #dedede;border-right:1px solid #dedede"></div>
<span class="t" id="f3" style="left:1545.5px;top:769px;font-size:14px;color:#c6c6c6;transform-origin:0 0;transform:scaleX(.96)">Previous</span>
<span class="t" id="f4" style="left:1630.5px;top:769px;font-size:14px;color:#222">1</span>
<span class="t" id="f5" style="left:1672.5px;top:769px;font-size:14px;color:#c6c6c6;transform-origin:0 0">Next</span>
<svg style="left:1722px;top:791px" width="14" height="14" viewBox="0 0 14 14">
 <path d="M3,3 L10.6,10.6" stroke="#565656" stroke-width="2.5"/>
 <path d="M0.8,0.8 H6.6 L0.8,6.6 Z M13,13 H7.2 L13,7.2 Z" fill="#565656"/>
</svg>
<!--/WIDGETCONTENT-->
<!--HIGHLIGHTS-->
<svg style="left:0;top:0;pointer-events:none" width="1771" height="823" viewBox="0 0 1771 823"><g fill="none" stroke="#3f46c8" stroke-width="4.85">
<rect x="15.52" y="123.47" width="442.95" height="41.90"/>
<rect x="33.52" y="278.53" width="404.05" height="30.85"/>
<rect x="894.52" y="352.43" width="119.15" height="173.90"/>
</g></svg>
<!--/HIGHLIGHTS-->
</body>
</html>
